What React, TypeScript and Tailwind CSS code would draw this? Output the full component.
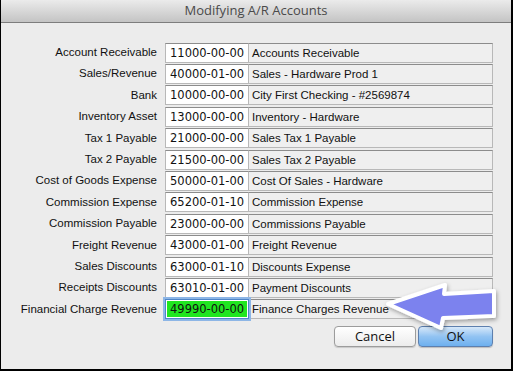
import React from "react";

type Row = { label: string; code: string; name: string; active?: boolean };

const rows: Row[] = [
  { label: "Account Receivable", code: "11000-00-00", name: "Accounts Receivable" },
  { label: "Sales/Revenue", code: "40000-01-00", name: "Sales - Hardware Prod 1" },
  { label: "Bank", code: "10000-00-00", name: "City First Checking - #2569874" },
  { label: "Inventory Asset", code: "13000-00-00", name: "Inventory - Hardware" },
  { label: "Tax 1 Payable", code: "21000-00-00", name: "Sales Tax 1 Payable" },
  { label: "Tax 2 Payable", code: "21500-00-00", name: "Sales Tax 2 Payable" },
  { label: "Cost of Goods Expense", code: "50000-01-00", name: "Cost Of Sales - Hardware" },
  { label: "Commission Expense", code: "65200-01-10", name: "Commission Expense" },
  { label: "Commission Payable", code: "23000-00-00", name: "Commissions Payable" },
  { label: "Freight Revenue", code: "43000-01-00", name: "Freight Revenue" },
  { label: "Sales Discounts", code: "63000-01-10", name: "Discounts Expense" },
  { label: "Receipts Discounts", code: "63010-01-00", name: "Payment Discounts" },
  { label: "Financial Charge Revenue", code: "49990-00-00", name: "Finance Charges Revenue", active: true },
];

const labelFont = "font-['Liberation_Sans',Arial,sans-serif]";
const codeFont = "font-['DejaVu_Sans',Verdana,sans-serif]";

function AccountRow({ row }: { row: Row }) {
  return (
    <div className="flex items-center h-[21.4px]">
      <div className={`w-[164px] pr-[8px] text-right text-[11.5px] text-[#111] whitespace-nowrap ${labelFont}`}>
        {row.label}
      </div>
      {row.active ? (
        <div className="relative w-[84px] h-[20px] border border-[#4f86c9] ring-2 ring-[#8db6e6] bg-white p-px z-10 overflow-hidden">
          <div className={`h-full bg-[#20e620] pl-[3px] leading-[16px] text-[11.5px] text-[#111] whitespace-nowrap ${codeFont}`}>
            {row.code}
          </div>
        </div>
      ) : (
        <div
          className={`w-[84px] h-[20px] border border-[#b8b8b8] border-t-[#8c8c8c] bg-white pl-[4px] leading-[18px] text-[11.5px] text-[#111] whitespace-nowrap overflow-hidden ${codeFont}`}
        >
          {row.code}
        </div>
      )}
      <div
        className={`-ml-px w-[245px] h-[20px] border border-[#b8b8b8] border-t-[#8c8c8c] bg-[#efefef] pl-[3px] leading-[18px] text-[11.5px] text-[#111] whitespace-nowrap ${labelFont}`}
      >
        {row.name}
      </div>
    </div>
  );
}

export default function App() {
  return (
    <div className="relative w-[513px] h-[371px] overflow-hidden bg-[#ececec] border-l border-r-2 border-b-2 border-black">
      {/* Title bar */}
      <div className="h-[23px] bg-gradient-to-b from-[#ebebeb] to-[#c4c4c4] border-b border-[#7d7d7d] flex items-center justify-center">
        <span className="text-[13px] text-[#4a4a4a] font-['Open_Sans',Arial,sans-serif]">Modifying A/R Accounts</span>
      </div>

      {/* Account rows */}
      <div className="pt-[19px] flex flex-col">
        {rows.map((r) => (
          <AccountRow key={r.label} row={r} />
        ))}
      </div>

      {/* Buttons */}
      <div className="flex justify-end gap-[2px] pr-[18px] pt-[6px]">
        <button className="w-[82px] h-[21px] rounded-[4px] border border-[#9c9c9c] bg-gradient-to-b from-white to-[#ececec] text-[13px] text-[#111] font-['Open_Sans',Arial,sans-serif] shadow-[0_1px_1px_rgba(0,0,0,0.15)]">
          Cancel
        </button>
        <button className="w-[75px] h-[21px] rounded-[4px] border border-[#5d7fae] bg-gradient-to-b from-[#d7e8f9] via-[#92c3f2] to-[#6db0ef] text-[13px] text-[#111] font-['Open_Sans',Arial,sans-serif] shadow-[0_1px_1px_rgba(0,0,0,0.2)]">
          OK
        </button>
      </div>

      {/* Callout arrow */}
      <svg className="absolute left-0 top-0 pointer-events-none" width="513" height="371">
        <defs>
          <filter id="sh" x="-20%" y="-20%" width="140%" height="140%">
            <feDropShadow dx="1" dy="2" stdDeviation="2" floodColor="#000" floodOpacity="0.35" />
          </filter>
        </defs>
        <polygon
          points="387,304 444,285 443,294 493,291 493,316 442,318 440,328"
          fill="#7b82ee"
          stroke="#ffffff"
          strokeWidth="4"
          strokeLinejoin="round"
          filter="url(#sh)"
        />
      </svg>
    </div>
  );
}
